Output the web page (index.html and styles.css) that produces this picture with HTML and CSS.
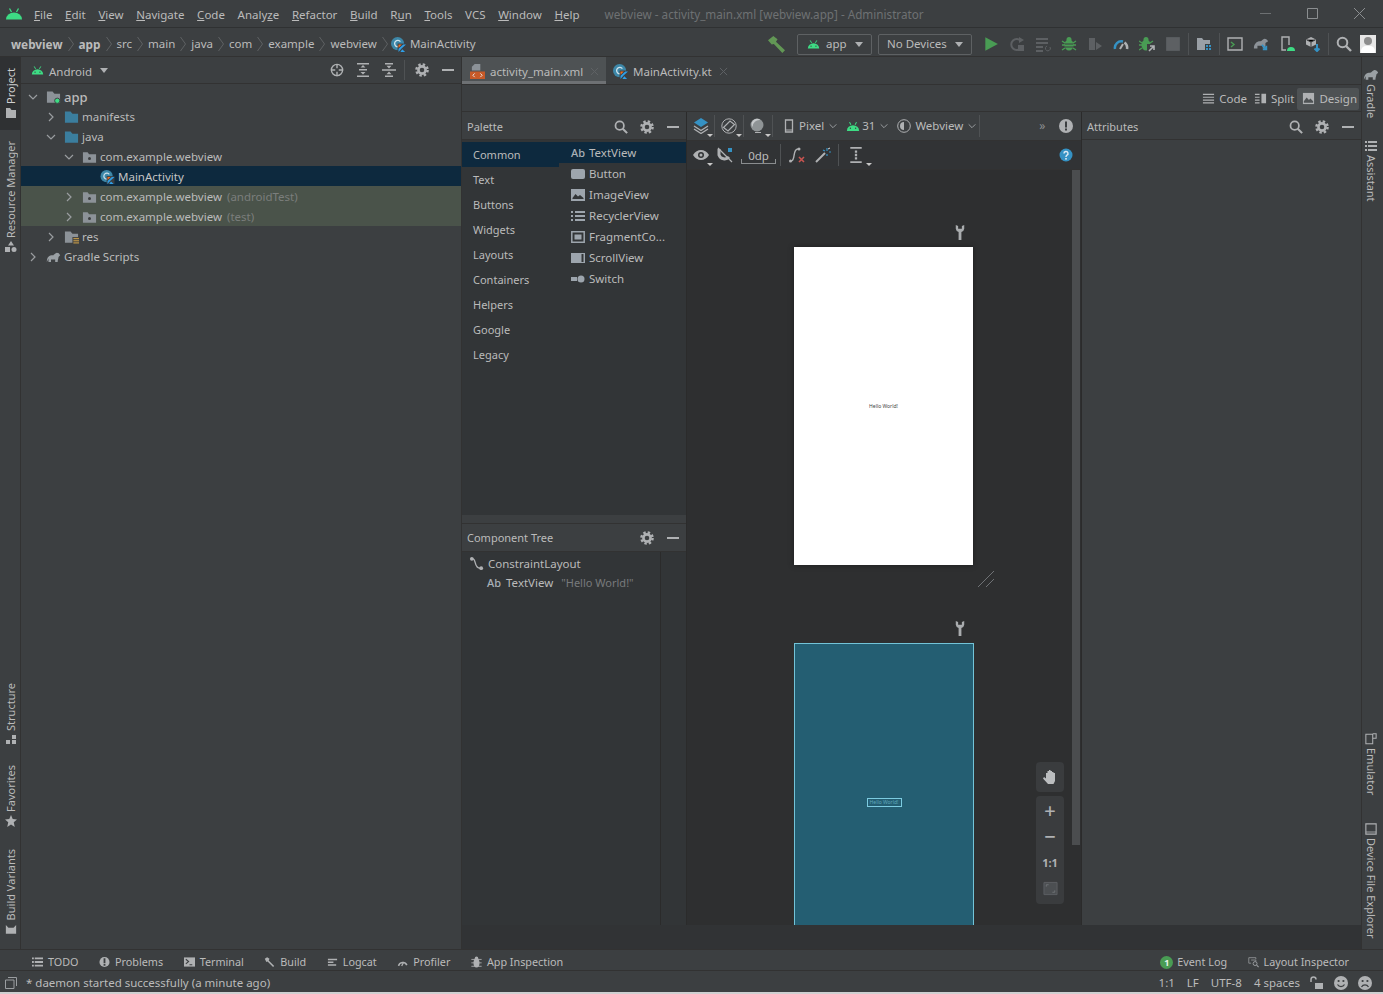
FILE: index.html
```html
<!DOCTYPE html>
<html lang="en">
<head>
<meta charset="utf-8">
<title>webview - activity_main.xml</title>
<link rel="stylesheet" href="styles.css">
</head>
<body>
<svg class="defs" width="0" height="0">
  <symbol id="android" viewBox="0 0 16 12"><path fill="#3ddc84" d="M1 11a7 6.500 0 0 1 14 0z"/><path stroke="#3ddc84" stroke-width="1.200" d="M4 1l1.600 3M12 1l-1.600 3"/><circle cx="5" cy="8" r=".8" fill="#3c3f41"/><circle cx="11" cy="8" r=".8" fill="#3c3f41"/></symbol>
  <symbol id="gear" viewBox="0 0 14 14"><circle cx="7" cy="7" r="3.600" fill="none" stroke="#afb1b3" stroke-width="2.600"/><circle cx="7" cy="7" r="5.600" fill="none" stroke="#afb1b3" stroke-width="2.400" stroke-dasharray="2.400 2"/></symbol>
  <symbol id="search" viewBox="0 0 16 16"><circle cx="6.500" cy="6.500" r="4.800" fill="none" stroke="#afb1b3" stroke-width="2"/><path stroke="#afb1b3" stroke-width="2.400" d="M10 10l5 5"/></symbol>
  <symbol id="minus" viewBox="0 0 14 14"><rect x="1" y="6" width="12" height="2" fill="#afb1b3"/></symbol>
  <symbol id="right" viewBox="0 0 12 12"><path fill="none" stroke="#9a9da0" stroke-width="1.200" d="M4 2l4 4-4 4"/></symbol>
  <symbol id="down" viewBox="0 0 12 12"><path fill="none" stroke="#9a9da0" stroke-width="1.200" d="M2 4l4 4 4-4"/></symbol>
  <symbol id="crumb" viewBox="0 0 16 16"><path fill="none" stroke="#5e6163" d="M5.500 1l5 7-5 7"/></symbol>
  <symbol id="folder" viewBox="0 0 16 14"><path fill="#3b7e9e" d="M1 1h6l2 2.500h6V13H1z"/></symbol>
  <symbol id="appfolder" viewBox="0 0 16 14"><path fill="#8c9298" d="M1 1h6l2 2.500h6V13H1z"/><circle cx="12" cy="11" r="2.800" fill="#3ddc84" stroke="#3c3f41"/></symbol>
  <symbol id="resfolder" viewBox="0 0 16 14"><path fill="#8c9298" d="M1 1h6l2 2.500h6V13H1z"/><path fill="#3c3f41" d="M9 7h7v8H9z"/><path stroke="#d0a24a" d="M10 8.500h6M10 10.500h6M10 12.500h6M10 14.500h6"/></symbol>
  <symbol id="pkg" viewBox="0 0 16 14"><path fill="#8c9298" d="M1 2h5l1.500 2H15v9H1z"/><circle cx="8" cy="8.500" r="1.600" fill="#3c3f41"/></symbol>
  <symbol id="kt" viewBox="0 0 16 16"><circle cx="7" cy="7" r="7" fill="#3d87a8"/><path fill="none" stroke="#cfe3ec" stroke-width="1.400" d="M10 5a3.400 3.400 0 1 0 0 4"/><path fill="#3c3f41" d="M7 7h9v9H7z"/><path fill="#f26d21" d="M8 8h3.500L8 11.500z"/><path fill="#2f9fe8" d="M8 16l3.500-4 4.500-4h-3L8 12.500zM12 13l3 3h-5z"/></symbol>
  <symbol id="hammer" viewBox="0 0 16 16"><path fill="#629755" d="M0 4l5-4 4 3-1.500 2.500L16 13.500 13.500 16 5.500 7.500 3.500 8z"/></symbol>
  <symbol id="play" viewBox="0 0 14 14"><path fill="#499c54" d="M2 1l11 6-11 6z"/></symbol>
  <symbol id="bug" viewBox="0 0 16 16"><ellipse cx="8" cy="9" rx="4.500" ry="5.500" fill="#499c54"/><circle cx="8" cy="3.500" r="2.500" fill="#499c54"/><path stroke="#499c54" stroke-width="1.400" d="M1 5l3 2M15 5l-3 2M1 9h3M15 9h-3M1 14l3-2M15 14l-3-2"/><path stroke="#3c3f41" d="M4 8h8M4 11h8"/></symbol>
  <symbol id="dim" viewBox="0 0 16 16"><path fill="#5d6063" d="M2 2h6v12H2zM9 6l6 4-6 4z"/></symbol>
  <symbol id="rerun" viewBox="0 0 16 16"><path fill="none" stroke="#5d6063" stroke-width="2" d="M12 5a5.500 5.500 0 1 0 0 7"/><path fill="#5d6063" d="M10 1l5 3-5 3zM9 9h6v6H9z"/></symbol>
  <symbol id="lines" viewBox="0 0 16 16"><path stroke="#5d6063" stroke-width="2" d="M1 3h12M1 7h12M1 11h7M1 15h7"/><path fill="none" stroke="#5d6063" d="M15 11a2.500 2.500 0 1 1-3-1"/></symbol>
  <symbol id="gauge" viewBox="0 0 16 16"><path fill="none" stroke="#3592c4" stroke-width="2.500" d="M2 13a6.500 6.500 0 0 1 8-7.500"/><path fill="none" stroke="#afb1b3" stroke-width="2.500" d="M11.500 6.500A6.500 6.500 0 0 1 14 13"/><path stroke="#afb1b3" stroke-width="2" d="M7 13l3-5"/></symbol>
  <symbol id="bugarrow" viewBox="0 0 16 16"><ellipse cx="7" cy="9" rx="4.500" ry="5.500" fill="#499c54"/><circle cx="7" cy="3.500" r="2.500" fill="#499c54"/><path stroke="#499c54" stroke-width="1.400" d="M0 5l3 2M14 5l-3 2M0 9h3M0 14l3-2"/><path fill="#3c3f41" d="M8 8h8v8H8z"/><path stroke="#afb1b3" stroke-width="1.600" d="M10 15l5-5M11 10h4v4" fill="none"/></symbol>
  <symbol id="stop" viewBox="0 0 14 14"><rect x="1" y="1" width="12" height="12" fill="#5d6063"/></symbol>
  <symbol id="structure" viewBox="0 0 16 16"><path fill="#9aa0a6" d="M1 2h5l1.500 2H14v10H1z"/><path fill="#3c3f41" d="M9 8h7v8H9z"/><path fill="#3592c4" d="M10 9h2v2h-2zM13 9h2v2h-2zM10 12h2v2h-2zM13 12h2v2h-2z"/></symbol>
  <symbol id="term" viewBox="0 0 16 16"><path fill="none" stroke="#afb1b3" stroke-width="1.400" d="M1 2h14v12H1z"/><path fill="none" stroke="#499c54" stroke-width="1.400" d="M4 6l3 2.500L4 11"/></symbol>
  <symbol id="gsync" viewBox="0 0 18 16"><path fill="#8c9298" d="M1 13c0-5 3-8 7-8 2 0 3-3 5-3s3 1 4 3l-3 2v6h-3v-3H5v3z"/><path stroke="#3592c4" stroke-width="2" fill="none" d="M10 9l5 5M15 10v4h-4"/></symbol>
  <symbol id="avd" viewBox="0 0 16 16"><path fill="none" stroke="#afb1b3" stroke-width="1.400" d="M3 1h7v13H3z"/><path fill="#3c3f41" d="M7 9h9v7H7z"/><path fill="#3ddc84" d="M8 15a4 4 0 0 1 8 0z"/></symbol>
  <symbol id="sdk" viewBox="0 0 16 16"><path fill="#afb1b3" d="M6 1l5 2.500v5L6 11 1 8.500v-5z"/><path stroke="#3c3f41" d="M1.500 3.800L6 6l4.500-2.200M6 6v5"/><path stroke="#3592c4" stroke-width="2" fill="none" d="M12 8v7M9.500 12.500l2.500 2.500 2.500-2.500"/></symbol>
  <symbol id="locate" viewBox="0 0 16 16"><circle cx="8" cy="8" r="6.400" fill="none" stroke="#afb1b3" stroke-width="1.600"/><path stroke="#afb1b3" stroke-width="1.600" d="M8 1v5M8 10v5M1 8h5M10 8h5"/></symbol>
  <symbol id="expand" viewBox="0 0 14 14"><path fill="#afb1b3" d="M1 0h12v1.500H1zM1 12.500h12V14H1zM3 6h8v1.500H3zM7 2l2.500 2.500h-5zM7 11.500L4.500 9h5z"/></symbol>
  <symbol id="collapse" viewBox="0 0 14 14"><path fill="#afb1b3" d="M0 6.300h14v1.400H0zM3 0h8v1.400H3zM3 12.600h8V14H3zM7 5.500L4.500 2.800h5zM7 8.500l2.500 2.700h-5z"/></symbol>
  <symbol id="close" viewBox="0 0 10 10"><path stroke="#5f6265" stroke-width="1.100" d="M1 1l8 8M9 1l-8 8"/></symbol>
  <symbol id="xml" viewBox="0 0 16 16"><path fill="#8c9298" d="M5 0h6v7H2V3z"/><rect y="8" width="16" height="8" fill="#c75a28"/><path fill="none" stroke="#e8e8e8" d="M5 10l-2 2 2 2M11 10l2 2-2 2"/></symbol>
  <symbol id="list" viewBox="0 0 14 14"><path fill="#afb1b3" d="M1 2h12v1.300H1zM1 5h12v1.300H1zM1 8h12v1.300H1zM1 11h12v1.300H1z"/></symbol>
  <symbol id="split" viewBox="0 0 14 14"><path fill="#afb1b3" d="M1 2h5v1.300H1zM1 5h5v1.300H1zM1 8h5v1.300H1zM1 11h5v1.300H1zM8 2h5v10H8z"/></symbol>
  <symbol id="image" viewBox="0 0 14 14"><path fill="#afb1b3" d="M1 1h12v12H1z"/><path fill="#4e5254" d="M2 10l3-4 2.500 2.500L9 7l3 3v1.500H2z"/></symbol>
  <symbol id="layers" viewBox="0 0 16 16"><path fill="#3592c4" d="M8 0l7 4.500L8 9 1 4.500z"/><path fill="none" stroke="#afb1b3" stroke-width="1.300" d="M1 8l7 4.500L15 8M1 11l7 4.500 7-4.500"/></symbol>
  <symbol id="rotate" viewBox="0 0 16 16"><circle cx="8" cy="8" r="7.200" fill="none" stroke="#afb1b3"/><path fill="#3c3f41" stroke="#afb1b3" stroke-width="1.200" d="M2.500 9.500L9 3l4.500 3.500L7 13z"/></symbol>
  <symbol id="night" viewBox="0 0 16 16"><circle cx="7" cy="7" r="6.500" fill="#8f9496"/><path fill="#c6c9cb" d="M3 2.500a6 6 0 0 1 7.500-.5A7 7 0 0 0 2.500 9 5.500 5.500 0 0 1 3 2.500z"/><path fill="none" stroke="#afb1b3" d="M5 14.500h6"/></symbol>
  <symbol id="phone" viewBox="0 0 12 14"><path fill="none" stroke="#afb1b3" stroke-width="1.300" d="M2.500 1h7v12h-7z"/><path stroke="#afb1b3" d="M3 11h6"/></symbol>
  <symbol id="theme" viewBox="0 0 14 14"><circle cx="7" cy="7" r="6.300" fill="none" stroke="#afb1b3"/><path fill="#afb1b3" d="M7 3a4 4 0 0 0 0 8z"/></symbol>
  <symbol id="warn" viewBox="0 0 14 14"><circle cx="7" cy="7" r="7" fill="#afb1b3"/><path fill="#3c3f41" d="M6 2.500h2v6H6zM6 9.500h2v2H6z"/></symbol>
  <symbol id="eye" viewBox="0 0 16 12"><path fill="#afb1b3" d="M0 6c2-3.500 5-5 8-5s6 1.500 8 5c-2 3.500-5 5-8 5S2 9.500 0 6z"/><circle cx="8" cy="6" r="3" fill="#313335"/><circle cx="8" cy="6" r="1.500" fill="#afb1b3"/></symbol>
  <symbol id="magnet" viewBox="0 0 16 16"><path fill="none" stroke="#afb1b3" stroke-width="3" d="M2 2v6a6 6 0 0 0 10 2"/><path stroke="#afb1b3" stroke-width="1.200" d="M1 1l14 14"/><path fill="#3592c4" d="M11 1h4v4h-4z"/></symbol>
  <symbol id="constraint" viewBox="0 0 16 16"><circle cx="3" cy="3" r="2" fill="#afb1b3"/><circle cx="13" cy="13" r="2" fill="#afb1b3"/><path fill="none" stroke="#afb1b3" stroke-width="1.400" d="M4 3c4 0 1 10 8 10"/></symbol>
  <symbol id="pathx" viewBox="0 0 16 16"><circle cx="1.500" cy="14" r="1.500" fill="#afb1b3"/><circle cx="10" cy="2" r="1.500" fill="#afb1b3"/><path fill="none" stroke="#afb1b3" stroke-width="1.400" d="M2 14c5 0 1-12 7-12"/><path stroke="#c75450" stroke-width="1.600" d="M10 10l5 5M15 10l-5 5"/></symbol>
  <symbol id="wand" viewBox="0 0 16 16"><path stroke="#afb1b3" stroke-width="2" d="M1 15L10 6"/><path stroke="#3592c4" stroke-width="1.200" d="M12 1v3M12 7v2M14 5h2M8 3l2 1"/><path stroke="#d8d8d8" d="M13 2l2-1"/></symbol>
  <symbol id="align" viewBox="0 0 14 14"><path fill="#afb1b3" d="M2 0h10v1.500H2zM2 12.500h10V14H2zM6 3h2v2H6zM6 6h2v2H6zM6 9h2v2H6z"/></symbol>
  <symbol id="help" viewBox="0 0 14 14"><circle cx="7" cy="7" r="6.500" fill="#3592c4"/><path fill="none" stroke="#dceaf3" stroke-width="1.500" d="M5 5.500a2 2 0 1 1 2.800 1.800C7 7.700 7 8 7 9"/><rect x="6.200" y="10" width="1.600" height="1.600" fill="#dceaf3"/></symbol>
  <symbol id="scroll" viewBox="0 0 14 14"><path fill="#9da5ad" d="M0 2h14v10H0z"/><path fill="#323537" d="M10.500 3h2v8h-2z"/></symbol>
  <symbol id="btn" viewBox="0 0 14 14"><rect y="2" width="14" height="10" rx="2" fill="#9da5ad"/></symbol>
  <symbol id="pimage" viewBox="0 0 14 14"><path fill="#9da5ad" d="M0 1h14v12H0z"/><path fill="#323537" d="M1.500 10l3-4 2.500 2.500L9 7l3.500 3v1H1.500z"/></symbol>
  <symbol id="plist" viewBox="0 0 14 14"><path fill="#9da5ad" d="M0 2h2v2H0zM4 2h10v2H4zM0 6h2v2H0zM4 6h10v2H4zM0 10h2v2H0zM4 10h10v2H4z"/></symbol>
  <symbol id="frag" viewBox="0 0 14 14"><path fill="none" stroke="#9da5ad" stroke-width="1.500" d="M.8 1.800h12.400v10.400H.8z"/><rect x="3.500" y="4.500" width="7" height="5" fill="#9da5ad"/></symbol>
  <symbol id="switch" viewBox="0 0 14 14"><rect y="5" width="6" height="4" fill="#9da5ad"/><circle cx="10" cy="7" r="3.500" fill="#9da5ad"/></symbol>
  <symbol id="wrench" viewBox="0 0 10 16"><path fill="#a9acae" d="M.5 0v4a4 4 0 0 0 3 3.400V16h3V7.400a4 4 0 0 0 3-3.400V0L7 1v3H3V1z"/></symbol>
  <symbol id="hand" viewBox="0 0 16 16"><path fill="#bbbdbf" d="M4 4h1.500V2H7V1h1.500v1H10v1h1.500v1H13v8l-1.500 3H6L1 9.500 2 8l2 1.500z"/></symbol>
  <symbol id="fit" viewBox="0 0 16 16"><path fill="#4c4f52" stroke="#5d6063" d="M1 1.500h14v13H1z"/><path fill="none" stroke="#6f7376" d="M3.500 6V4h2.500M12.500 10v2H10"/></symbol>
  <symbol id="star" viewBox="0 0 14 14"><path fill="#afb1b3" d="M7 0l2 4.800 5 .4-3.800 3.300L11.400 14 7 11.200 2.600 14l1.200-5.500L0 5.200l5-.4z"/></symbol>
  <symbol id="vfolder" viewBox="0 0 12 12"><path fill="#afb1b3" d="M1 1h4l1.500 2H11v8H1z"/></symbol>
  <symbol id="shapes" viewBox="0 0 12 12"><path fill="#afb1b3" d="M6 0l3 4.500H3zM0 6h5v5H0z"/><circle cx="9" cy="8.500" r="2.500" fill="#afb1b3"/></symbol>
  <symbol id="blocks" viewBox="0 0 12 12"><path fill="#afb1b3" d="M7 1h4v4H7zM1 6h4v4H1zM7 6h4v4H7z"/></symbol>
  <symbol id="bv" viewBox="0 0 14 12"><path fill="#afb1b3" d="M1 1l3 3h6l3-3v10H1z"/></symbol>
  <symbol id="gradle" viewBox="0 0 18 14"><path fill="#9aa0a4" d="M1 13c0-6 3-8 7-8 2 0 3-3 5-3s3 1 4 3l-2 2c0 2-1 3-1 6h-3v-3H6v3H3V9z"/></symbol>
  <symbol id="asst" viewBox="0 0 12 12"><path fill="#afb1b3" d="M0 1h2v2H0zM3 1h9v2H3zM0 5h2v2H0zM3 5h9v2H3zM0 9h2v2H0zM3 9h9v2H3z"/></symbol>
  <symbol id="emu" viewBox="0 0 14 14"><path fill="none" stroke="#afb1b3" stroke-width="1.200" d="M1 1.500h8v11H1zM9 1h4v5H9"/></symbol>
  <symbol id="dev" viewBox="0 0 14 14"><path fill="none" stroke="#afb1b3" stroke-width="1.300" d="M1 1h12v12H1z"/><path stroke="#afb1b3" d="M1 10.500h12"/></symbol>
  <symbol id="prob" viewBox="0 0 12 12"><circle cx="6" cy="6" r="5.500" fill="#afb1b3"/><path fill="#3c3f41" d="M5 2h2v5H5zM5 8h2v2H5z"/></symbol>
  <symbol id="tbterm" viewBox="0 0 12 12"><rect x="0" y="1" width="12" height="10" fill="#afb1b3"/><path fill="none" stroke="#3c3f41" stroke-width="1.200" d="M2 3l3 2.500L2 8M6 9h3"/></symbol>
  <symbol id="tbbuild" viewBox="0 0 14 14"><path fill="#afb1b3" d="M1 3l3-2 3 2-1 2 7 7-1.500 1.500L4.500 6.500 3 7z"/></symbol>
  <symbol id="logcat" viewBox="0 0 12 12"><path fill="#afb1b3" d="M1 2.500h10V4H1zM1 5.500h6V7H1zM1 8.500h9V10H1z"/></symbol>
  <symbol id="prof" viewBox="0 0 14 12"><path fill="none" stroke="#afb1b3" stroke-width="2" d="M2 11a5.500 5.500 0 0 1 10.500-1"/><path stroke="#afb1b3" stroke-width="1.600" d="M6 11l2.500-5"/></symbol>
  <symbol id="insp" viewBox="0 0 12 14"><ellipse cx="6" cy="8" rx="3.500" ry="5.500" fill="#afb1b3"/><circle cx="6" cy="2.500" r="2" fill="#afb1b3"/><path stroke="#afb1b3" d="M0 4h12M0 8h12M0 12h12"/></symbol>
  <symbol id="li" viewBox="0 0 14 14"><path fill="none" stroke="#9a9da0" d="M1 1.500h9v2M1 1.500v7h3M4 4.500h6v2"/><circle cx="9" cy="9" r="2.500" fill="none" stroke="#9a9da0" stroke-width="1.200"/><path stroke="#9a9da0" stroke-width="1.400" d="M11 11l2.500 2.500"/></symbol>
  <symbol id="win" viewBox="0 0 12 12"><path fill="none" stroke="#9a9da0" d="M3 .5h8.500V9M.5 3h8.500v8.500H.5z"/></symbol>
  <symbol id="lock" viewBox="0 0 14 14"><path fill="none" stroke="#afb1b3" stroke-width="1.500" d="M1 6V3.500a2.500 2.500 0 0 1 5 0"/><rect x="5" y="7" width="8" height="6" fill="#afb1b3"/></symbol>
  <symbol id="smile" viewBox="0 0 14 14"><circle cx="7" cy="7" r="7" fill="#afb1b3"/><circle cx="4.600" cy="5" r="1.100" fill="#3c3f41"/><circle cx="9.400" cy="5" r="1.100" fill="#3c3f41"/><path fill="none" stroke="#3c3f41" stroke-width="1.200" d="M3.500 8.500a4 4 0 0 0 7 0"/></symbol>
  <symbol id="sad" viewBox="0 0 14 14"><circle cx="7" cy="7" r="7" fill="#afb1b3"/><circle cx="4.600" cy="5" r="1.100" fill="#3c3f41"/><circle cx="9.400" cy="5" r="1.100" fill="#3c3f41"/><path fill="none" stroke="#3c3f41" stroke-width="1.200" d="M3.500 11a4 4 0 0 1 7 0"/></symbol>
  <symbol id="logo" viewBox="0 0 18 12"><path fill="#3ddc84" d="M1 11.500a8 7 0 0 1 16 0z"/><path stroke="#3ddc84" stroke-width="1.300" d="M4.500 .5l2 3.500M13.500 .5l-2 3.500"/></symbol>
</svg>

<header class="titlebar">
  <svg class="logo"><use href="#logo"/></svg>
  <nav class="menu">
    <span><u>F</u>ile</span><span><u>E</u>dit</span><span><u>V</u>iew</span><span><u>N</u>avigate</span><span><u>C</u>ode</span><span>Analy<u>z</u>e</span><span><u>R</u>efactor</span><span><u>B</u>uild</span><span>R<u>u</u>n</span><span><u>T</u>ools</span><span>VCS</span><span><u>W</u>indow</span><span><u>H</u>elp</span>
  </nav>
  <span class="wintitle">webview - activity_main.xml [webview.app] - Administrator</span>
  <div class="winctl">
    <svg viewBox="0 0 47 13"><path stroke="#6d7072" d="M18 6.500h11"/></svg>
    <svg viewBox="0 0 47 13"><path fill="none" stroke="#8b8e90" d="M18.500 1.500h10v10h-10z"/></svg>
    <svg viewBox="0 0 47 13"><path stroke="#8b8e90" d="M18 1l11 11M29 1L18 12"/></svg>
  </div>
</header>

<div class="navbar">
  <div class="crumbs">
    <b>webview</b><svg class="sep"><use href="#crumb"/></svg>
    <b>app</b><svg class="sep"><use href="#crumb"/></svg>
    <span>src</span><svg class="sep"><use href="#crumb"/></svg>
    <span>main</span><svg class="sep"><use href="#crumb"/></svg>
    <span>java</span><svg class="sep"><use href="#crumb"/></svg>
    <span>com</span><svg class="sep"><use href="#crumb"/></svg>
    <span>example</span><svg class="sep"><use href="#crumb"/></svg>
    <span>webview</span><svg class="sep"><use href="#crumb"/></svg>
    <span class="crumb-file"><svg class="ic15"><use href="#kt"/></svg>MainActivity</span>
  </div>
  <div class="actions">
    <svg class="act big"><use href="#hammer"/></svg>
    <div class="combo app"><svg class="ic13"><use href="#android"/></svg><span>app</span><i class="caret"></i></div>
    <div class="combo dev"><span>No Devices</span><i class="caret"></i></div>
    <div class="actgroup">
      <svg class="act"><use href="#play"/></svg><svg class="act"><use href="#rerun"/></svg><svg class="act"><use href="#lines"/></svg><svg class="act"><use href="#bug"/></svg><svg class="act"><use href="#dim"/></svg><svg class="act"><use href="#gauge"/></svg><svg class="act"><use href="#bugarrow"/></svg><svg class="act"><use href="#stop"/></svg>
      <i class="vsep"></i>
      <svg class="act"><use href="#structure"/></svg>
      <i class="vsep"></i>
      <svg class="act"><use href="#term"/></svg><svg class="act"><use href="#gsync"/></svg><svg class="act"><use href="#avd"/></svg><svg class="act"><use href="#sdk"/></svg>
      <i class="vsep"></i>
      <svg class="act"><use href="#search"/></svg>
      <div class="avatar"><i></i><b></b></div>
    </div>
  </div>
</div>

<main class="workspace">
  <aside class="stripe left">
    <div class="st active"><svg><use href="#vfolder"/></svg><span>Project</span></div>
    <div class="st"><svg><use href="#shapes"/></svg><span>Resource Manager</span></div>
    <div class="st push"><svg><use href="#blocks"/></svg><span>Structure</span></div>
    <div class="st"><svg><use href="#star"/></svg><span>Favorites</span></div>
    <div class="st"><svg><use href="#bv"/></svg><span>Build Variants</span></div>
  </aside>

  <section class="project">
    <div class="toolhead">
      <svg class="ic13 head-android"><use href="#android"/></svg><span class="head-title">Android</span><i class="caret"></i>
      <div class="headicons">
        <svg><use href="#locate"/></svg><svg><use href="#expand"/></svg><svg><use href="#collapse"/></svg><i class="vsep"></i><svg class="g"><use href="#gear"/></svg><svg class="m"><use href="#minus"/></svg>
      </div>
    </div>
    <ul class="tree">
      <li class="d0 strong"><svg class="ar"><use href="#down"/></svg><svg class="fi"><use href="#appfolder"/></svg><span>app</span></li>
      <li class="d1"><svg class="ar"><use href="#right"/></svg><svg class="fi"><use href="#folder"/></svg><span>manifests</span></li>
      <li class="d1"><svg class="ar"><use href="#down"/></svg><svg class="fi"><use href="#folder"/></svg><span>java</span></li>
      <li class="d2"><svg class="ar"><use href="#down"/></svg><svg class="fi"><use href="#pkg"/></svg><span>com.example.webview</span></li>
      <li class="d3 selected"><i class="ar"></i><svg class="fi"><use href="#kt"/></svg><span>MainActivity</span></li>
      <li class="d2 tests"><svg class="ar"><use href="#right"/></svg><svg class="fi"><use href="#pkg"/></svg><span>com.example.webview</span><em>(androidTest)</em></li>
      <li class="d2 tests"><svg class="ar"><use href="#right"/></svg><svg class="fi"><use href="#pkg"/></svg><span>com.example.webview</span><em>(test)</em></li>
      <li class="d1"><svg class="ar"><use href="#right"/></svg><svg class="fi"><use href="#resfolder"/></svg><span>res</span></li>
      <li class="d0"><svg class="ar"><use href="#right"/></svg><svg class="fi"><use href="#gradle"/></svg><span>Gradle Scripts</span></li>
    </ul>
  </section>

  <section class="editor">
    <div class="tabs">
      <div class="tab on"><svg class="ic15"><use href="#xml"/></svg><span>activity_main.xml</span><svg class="x"><use href="#close"/></svg></div>
      <div class="tab"><svg class="ic15"><use href="#kt"/></svg><span>MainActivity.kt</span><svg class="x"><use href="#close"/></svg></div>
    </div>
    <div class="modes">
      <div class="mode"><svg><use href="#list"/></svg>Code</div>
      <div class="mode"><svg><use href="#split"/></svg>Split</div>
      <div class="mode on"><svg><use href="#image"/></svg>Design</div>
    </div>
    <div class="designer">
      <div class="leftcol">
        <div class="palette">
          <div class="phead"><span>Palette</span><div class="headicons small"><svg><use href="#search"/></svg><svg class="g"><use href="#gear"/></svg><svg class="m"><use href="#minus"/></svg></div></div>
          <div class="pbody">
            <ul class="cats">
              <li class="sel">Common</li><li>Text</li><li>Buttons</li><li>Widgets</li><li>Layouts</li><li>Containers</li><li>Helpers</li><li>Google</li><li>Legacy</li>
            </ul>
            <ul class="items">
              <li class="sel"><b>Ab</b>TextView</li>
              <li><svg><use href="#btn"/></svg>Button</li>
              <li><svg><use href="#pimage"/></svg>ImageView</li>
              <li><svg><use href="#plist"/></svg>RecyclerView</li>
              <li><svg><use href="#frag"/></svg>FragmentCo...</li>
              <li><svg><use href="#scroll"/></svg>ScrollView</li>
              <li><svg><use href="#switch"/></svg>Switch</li>
            </ul>
          </div>
        </div>
        <div class="ctree">
          <div class="phead"><span>Component Tree</span><div class="headicons small"><svg class="g"><use href="#gear"/></svg><svg class="m"><use href="#minus"/></svg></div></div>
          <div class="cbody">
            <div class="cnode"><svg><use href="#constraint"/></svg><span>ConstraintLayout</span></div>
            <div class="cnode child"><b>Ab</b><span>TextView</span><em>"Hello World!"</em></div>
          </div>
        </div>
      </div>
      <div class="center">
        <div class="ctool">
          <span class="tb w26 corner"><svg><use href="#layers"/></svg></span><i class="vsep"></i>
          <span class="tb w28 corner"><svg><use href="#rotate"/></svg></span><i class="vsep"></i>
          <span class="tb w28 corner"><svg><use href="#night"/></svg></span><i class="vsep"></i>
          <span class="tb lbl pixel"><svg class="p"><use href="#phone"/></svg>Pixel<svg class="ch"><use href="#down"/></svg></span>
          <span class="tb lbl"><svg class="a"><use href="#android"/></svg>31<svg class="ch"><use href="#down"/></svg></span>
          <span class="tb lbl theme"><svg class="p2"><use href="#theme"/></svg>Webview<svg class="ch"><use href="#down"/></svg></span><i class="vsep"></i>
          <span class="more">»</span>
          <span class="tb warn"><svg><use href="#warn"/></svg></span>
        </div>
        <div class="ctool second">
          <span class="tb w26 corner"><svg><use href="#eye"/></svg></span>
          <span class="tb w22"><svg><use href="#magnet"/></svg></span>
          <span class="dp">0dp</span><i class="vsep"></i>
          <span class="tb w32"><svg><use href="#pathx"/></svg></span>
          <span class="tb w20"><svg><use href="#wand"/></svg></span><i class="vsep"></i>
          <span class="tb w34 corner"><svg><use href="#align"/></svg></span>
          <span class="tb warn"><svg><use href="#help"/></svg></span>
        </div>
        <div class="canvas">
          <svg class="wrench w1"><use href="#wrench"/></svg>
          <div class="device light"><span class="hello">Hello World!</span></div>
          <svg class="resize" viewBox="0 0 18 18"><path stroke="#6f7275" d="M1 17L17 1M9 17l8-8"/></svg>
          <svg class="wrench w2"><use href="#wrench"/></svg>
          <div class="device blue"><span class="hello">Hello World!</span></div>
          <div class="vscroll"></div>
          <div class="zoomgroup hand"><svg><use href="#hand"/></svg></div>
          <div class="zoomgroup zoom"><span class="z">+</span><span class="z">−</span><span class="z one">1:1</span><svg><use href="#fit"/></svg></div>
        </div>
      </div>
      <div class="attrs">
        <div class="phead"><span>Attributes</span><div class="headicons small"><svg><use href="#search"/></svg><svg class="g"><use href="#gear"/></svg><svg class="m"><use href="#minus"/></svg></div></div>
      </div>
    </div>
    <div class="edfoot"></div>
  </section>

  <aside class="stripe right">
    <div class="st"><svg class="wide"><use href="#gradle"/></svg><span>Gradle</span></div>
    <div class="st"><svg><use href="#asst"/></svg><span>Assistant</span></div>
    <div class="st push"><svg><use href="#emu"/></svg><span>Emulator</span></div>
    <div class="st"><svg><use href="#dev"/></svg><span>Device File Explorer</span></div>
  </aside>
</main>

<div class="toolbar">
  <span class="tw"><svg><use href="#asst"/></svg>TODO</span>
  <span class="tw"><svg><use href="#prob"/></svg>Problems</span>
  <span class="tw"><svg><use href="#tbterm"/></svg>Terminal</span>
  <span class="tw"><svg><use href="#tbbuild"/></svg>Build</span>
  <span class="tw"><svg><use href="#logcat"/></svg>Logcat</span>
  <span class="tw"><svg><use href="#prof"/></svg>Profiler</span>
  <span class="tw"><svg><use href="#insp"/></svg>App Inspection</span>
  <span class="tw evlog"><i class="badge">1</i>Event Log</span>
  <span class="tw"><svg><use href="#li"/></svg>Layout Inspector</span>
</div>
<footer class="status">
  <svg class="win"><use href="#win"/></svg>
  <span class="msg">* daemon started successfully (a minute ago)</span>
  <div class="sright">
    <span>1:1</span><span>LF</span><span>UTF-8</span><span>4 spaces</span>
    <svg class="s1"><use href="#lock"/></svg><svg><use href="#smile"/></svg><svg><use href="#sad"/></svg>
  </div>
</footer>
</body>
</html>
```
FILE: styles.css
```css
* { box-sizing: border-box; }
html, body { margin: 0; height: 994px; overflow: hidden; }
body {
  width: 1383px;
  background: #3c3f41;
  color: #bbbbbb;
  font: 11.500px/16px "Noto Sans", "Noto Sans CJK KR", sans-serif;
  display: flex;
  flex-direction: column;
  border-bottom: 2px solid #cfd0d1;
}
ul { list-style: none; margin: 0; padding: 0; }
svg { display: block; flex: none; overflow: visible; }
i, em { font-style: normal; }
.defs { position: absolute; }

.titlebar { height: 28px; display: flex; align-items: center; flex: none; border-bottom: 1px solid #2f3132; }
.logo { width: 18px; height: 12px; margin-left: 5px; }
.menu { display: flex; gap: 12.700px; margin-left: 11px; padding-top: 2px; }
.wintitle { margin-left: 25px; padding-top: 1px; color: #6e7173; font-size: 11.700px; }
.winctl { margin-left: auto; display: flex; }
.winctl svg { width: 47px; height: 13px; }

.navbar { height: 29px; display: flex; align-items: center; flex: none; border-bottom: 1px solid #323232; padding-top: 4px; }
.crumbs { display: flex; align-items: center; padding-left: 11px; }
.crumbs b { font-weight: 700; font-size: 11.800px; }
.sep { width: 16px; height: 16px; }
.crumb-file { display: flex; align-items: center; gap: 4px; margin-left: -2px; }
.ic15 { width: 15px; height: 15px; }
.ic13 { width: 13px; height: 11px; }
.actions { margin-left: auto; display: flex; align-items: center; padding-right: 7px; }
.act { width: 16px; height: 16px; margin: 0 5px; }
.act.big { width: 17px; height: 17px; margin: 0 12px 0 0; }
.combo { height: 21px; border: 1px solid #5e6163; border-radius: 2px; display: flex; align-items: center; gap: 6px; padding: 0 8px; margin-right: 6px; white-space: nowrap; }
.combo.app { width: 75px; padding-left: 9px; }
.combo.dev { width: 94px; margin-right: 0; }
.caret { width: 0; height: 0; border: 4.500px solid transparent; border-top: 5px solid #afb1b3; border-bottom: 0; margin-left: auto; }
.actgroup { display: flex; align-items: center; margin-left: 6px; }
.vsep { width: 1px; height: 22px; background: #4f5254; flex: none; margin: 0 2px; }
.avatar { width: 16px; height: 18px; background: #e6e6e6; margin-left: 3px; position: relative; overflow: hidden; }
.avatar i { position: absolute; left: 4px; top: 2px; width: 8px; height: 8px; border-radius: 50%; background: #8d8d8d; }
.avatar b { position: absolute; left: 1px; top: 11px; width: 14px; height: 10px; border-radius: 5px; background: #fff; }

.workspace { flex: 1; min-height: 0; display: flex; }
.stripe { width: 21px; flex: none; display: flex; flex-direction: column; border-right: 1px solid #323232; font-size: 11px; }
.stripe.left { padding-bottom: 3px; }
.stripe.right { width: 22px; border-right: 0; border-left: 1px solid #323232; }
.st { display: flex; align-items: center; gap: 3px; writing-mode: vertical-rl; padding: 11px 2px 11px 0; width: 100%; line-height: 18px; }
.st svg { width: 12px; height: 12px; }
.left .st { transform: rotate(180deg); }
.left .st svg { transform: rotate(180deg); }
.st.active { background: #2f3133; color: #d0d0d0; }
.right .st { padding-right: 3px; }
.right .st svg.wide { width: 16px; height: 13px; }
.push { margin-top: auto; }
.left .push { margin-bottom: -3px; }
.right .push { margin-bottom: 5px; }

.project { width: 441px; flex: none; display: flex; flex-direction: column; border-right: 1px solid #323232; }
.toolhead { height: 27px; display: flex; align-items: center; flex: none; border-bottom: 1px solid #323232; padding-left: 10px; }
.head-title { margin-left: 5px; padding-top: 4px; }
.toolhead .caret { margin-left: 8px; }
.headicons { margin-left: auto; display: flex; align-items: center; }
.headicons svg { width: 14px; height: 14px; margin-left: 12px; }
.toolhead .headicons { padding-right: 6px; }
.toolhead .headicons .vsep { height: 20px; margin: 0 0 0 8px; }
.toolhead .headicons .g { margin-left: 10px; }
.headicons.small { padding-right: 6px; }
.tree { padding-top: 2px; }
.tree li { height: 20px; display: flex; align-items: center; padding-top: 2px; }
.d0 { padding-left: 6px; }
.d1 { padding-left: 24px; }
.d2 { padding-left: 42px; }
.d3 { padding-left: 60px; }
.ar { width: 12px; height: 12px; margin-right: 7px; flex: none; }
.fi { width: 15px; height: 14px; margin-right: 3px; }
.tree .strong { font-size: 13px; font-weight: 500; }
.tree .selected { background: #0d293e; color: #c4c4c4; }
.tree .tests { background: #4a534a; }
.tree em { margin-left: 5px; color: #7b7e7c; }

.editor { flex: 1; min-width: 0; display: flex; flex-direction: column; }
.tabs { height: 28px; display: flex; flex: none; border-bottom: 1px solid #323232; }
.tab { display: flex; align-items: center; padding: 2px 6px 0 7px; gap: 5px; }
.tab.on { width: 144px; background: #4e5254; border-bottom: 3px solid #6e7174; padding: 5px 6px 0 8px; }
.tab .x { width: 9px; height: 9px; margin-left: 2px; }
.modes { height: 27px; display: flex; justify-content: flex-end; align-items: center; gap: 7px; padding: 1px 2px 0 0; flex: none; border-bottom: 1px solid #323232; }
.mode { display: flex; align-items: center; gap: 4px; height: 22px; }
.mode svg { width: 13px; height: 13px; }
.mode.on { background: #4e5254; border-radius: 2px; padding: 0 2px 0 5px; margin-left: -4px; }

.designer { flex: 1; min-height: 0; display: flex; }
.leftcol { width: 225px; flex: none; display: flex; flex-direction: column; background: #323537; border-right: 1px solid #2b2b2b; }
.palette { flex: 1; min-height: 0; display: flex; flex-direction: column; border-bottom: 8px solid #3c3f41; }
.phead { height: 28px; flex: none; display: flex; align-items: center; padding: 2px 0 0 5px; font-size: 11px; background: #3c3f41; border-bottom: 1px solid #323232; }
.ctree .phead { padding-top: 0; }
.pbody { flex: 1; display: flex; padding-top: 2px; }
.cats { width: 97px; flex: none; font-size: 11px; }
.cats li { height: 25px; line-height: 25px; padding-left: 11px; }
.cats .sel { background: #0d293e; }
.items { flex: 1; }
.items li { height: 21px; display: flex; align-items: center; padding-left: 12px; }
.items svg { width: 14px; height: 14px; margin-right: 4px; }
.items .sel { background: #0d293e; }
.items b { font-weight: 500; width: 18px; font-size: 11px; color: #a9b0b7; }
.ctree { height: 402px; flex: none; display: flex; flex-direction: column; border-top: 1px solid #323232; }
.cbody { flex: 1; width: 199px; border-right: 1px solid #2b2b2b; padding: 2px 0 0 7px; }
.cnode { display: flex; align-items: center; height: 19px; gap: 4px; }
.cnode svg { width: 15px; height: 15px; }
.cnode.child { padding-left: 18px; gap: 5px; }
.cnode b { font-weight: 500; font-size: 11px; color: #a9b0b7; }
.cnode em { margin-left: 3px; font-size: 11px; color: #787a7c; }

.center { width: 395px; flex: none; display: flex; flex-direction: column; background: #2e2f30; border-right: 1px solid #2b2b2b; }
.ctool { height: 29px; display: flex; align-items: center; flex: none; background: #3c3f41; border-bottom: 1px solid #323232; }
.ctool .vsep { margin: 0; }
.ctool.second { background: #313335; }
.tb { display: flex; align-items: center; justify-content: center; position: relative; height: 24px; flex: none; }
.tb svg { width: 16px; height: 16px; }
.w20 { width: 20px; margin-right: 5px; } .w22 { width: 22px; } .w26 { width: 27px; } .w28 { width: 28px; } .w32 { width: 32px; } .w34 { width: 34px; }
.corner::after { content: ""; position: absolute; right: 1px; bottom: 1px; border: 3px solid transparent; border-top: 3px solid #c8c8c8; border-bottom: 0; }
.lbl { gap: 2px; padding: 0 2px; margin-right: 4px; }
.pixel { margin-left: 8px; }
.theme { margin-right: 0; }
.lbl svg.p { width: 12px; height: 14px; margin-right: 2px; }
.lbl svg.a { width: 14px; height: 11px; }
.lbl svg.p2 { width: 14px; height: 14px; margin-right: 2px; }
.lbl svg.ch { width: 10px; height: 10px; margin-left: 2px; }
.more { margin-left: 59px; color: #8b8e90; font-size: 12px; }
.warn { margin-left: auto; margin-right: 8px; }
.warn svg { width: 14px; height: 14px; }
.dp { width: 35px; margin: 0 4px 0 5px; text-align: center; border-bottom: 1px solid #8a8d8f; line-height: 15px; position: relative; top: 1px; }
.dp::before, .dp::after { content: ""; position: absolute; bottom: -1px; width: 1px; height: 5px; background: #8a8d8f; }
.dp::before { left: 0; }
.dp::after { right: 0; }
.canvas { flex: 1; min-height: 0; position: relative; overflow: hidden; }
.device { position: absolute; left: 107px; width: 179px; height: 318px; display: flex; align-items: center; justify-content: center; }
.device.light { top: 77px; background: #fff; box-shadow: 0 0 5px #1c1c1c; }
.device.blue { top: 473px; width: 180px; background: #245e72; border: 1px solid #73c4d8; }
.hello { font-size: 5px; line-height: 8px; color: #444; white-space: nowrap; width: 35px; text-align: center; }
.blue .hello { border: 1px solid #7ccbe0; color: #5fa8bd; height: 9px; line-height: 7px; }
.wrench { position: absolute; left: 268px; width: 10px; height: 15px; }
.w1 { top: 55px; }
.w2 { top: 451px; }
.resize { position: absolute; left: 290px; top: 400px; width: 18px; height: 18px; }
.vscroll { position: absolute; left: 385px; top: 0; width: 8px; height: 675px; background: #4b4d4f; }
.zoomgroup { position: absolute; left: 349px; width: 28px; background: #3a3c3e; border-radius: 4px; display: flex; flex-direction: column; align-items: center; }
.zoomgroup.hand { top: 592px; height: 30px; justify-content: center; }
.zoomgroup.hand svg { width: 16px; height: 16px; }
.zoomgroup.zoom { top: 626px; height: 108px; padding-top: 2px; }
.z { height: 26px; line-height: 26px; font-size: 20px; color: #afb1b3; font-weight: 500; }
.z.one { font-size: 11px; font-weight: 700; }
.zoomgroup.zoom svg { width: 15px; height: 15px; margin-top: 5px; }

.attrs { flex: 1; background: #3c3f41; }
.edfoot { height: 24px; flex: none; background: #313335; }

.toolbar { height: 22px; flex: none; display: flex; align-items: center; gap: 20.500px; padding: 4px 34px 0 32px; font-size: 10.800px; border-top: 1px solid #323232; border-bottom: 1px solid #323232; }
.tw { display: flex; align-items: center; gap: 5px; }
.tw svg { width: 11px; height: 12px; }
.evlog { margin-left: auto; }
.badge { width: 13px; height: 13px; border-radius: 50%; background: #499c54; color: #e8f3e9; font-size: 9px; line-height: 13px; text-align: center; font-weight: 700; margin-right: -1px; }
.status { height: 21px; flex: none; display: flex; align-items: center; padding: 2px 0 0 5px; }
.win { width: 12px; height: 12px; }
.msg { margin-left: 9px; }
.sright { margin-left: auto; display: flex; align-items: center; gap: 12px; padding-right: 11px; }
.sright svg { width: 14px; height: 14px; margin-left: -2px; }
```
